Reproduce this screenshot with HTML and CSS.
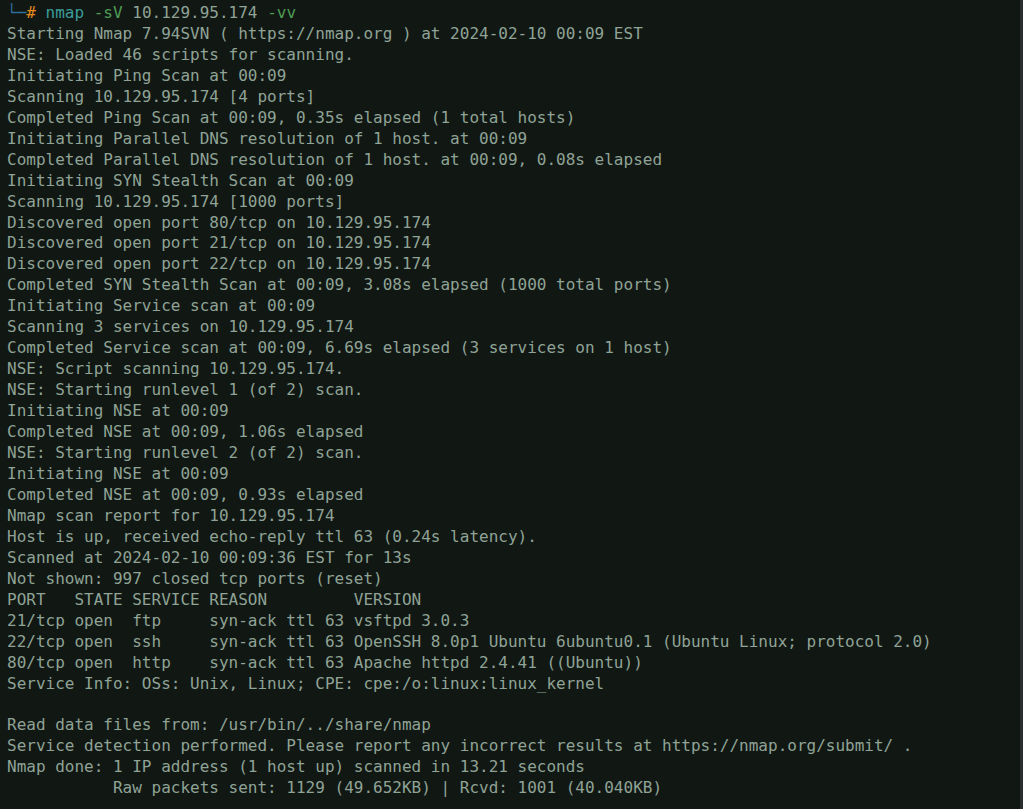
FILE: index.html
```html
<!DOCTYPE html>
<html>
<head>
<meta charset="utf-8">
<link rel="stylesheet" href="styles.css">
</head>
<body>
<div class="term">
<pre class="out"><span class="box">└─</span><span class="hash">#</span> <span class="cmd">nmap</span> <span class="flag">-sV</span> 10.129.95.174 <span class="flag">-vv</span>
Starting Nmap 7.94SVN ( https://nmap.org ) at 2024-02-10 00:09 EST
NSE: Loaded 46 scripts for scanning.
Initiating Ping Scan at 00:09
Scanning 10.129.95.174 [4 ports]
Completed Ping Scan at 00:09, 0.35s elapsed (1 total hosts)
Initiating Parallel DNS resolution of 1 host. at 00:09
Completed Parallel DNS resolution of 1 host. at 00:09, 0.08s elapsed
Initiating SYN Stealth Scan at 00:09
Scanning 10.129.95.174 [1000 ports]
Discovered open port 80/tcp on 10.129.95.174
Discovered open port 21/tcp on 10.129.95.174
Discovered open port 22/tcp on 10.129.95.174
Completed SYN Stealth Scan at 00:09, 3.08s elapsed (1000 total ports)
Initiating Service scan at 00:09
Scanning 3 services on 10.129.95.174
Completed Service scan at 00:09, 6.69s elapsed (3 services on 1 host)
NSE: Script scanning 10.129.95.174.
NSE: Starting runlevel 1 (of 2) scan.
Initiating NSE at 00:09
Completed NSE at 00:09, 1.06s elapsed
NSE: Starting runlevel 2 (of 2) scan.
Initiating NSE at 00:09
Completed NSE at 00:09, 0.93s elapsed
Nmap scan report for 10.129.95.174
Host is up, received echo-reply ttl 63 (0.24s latency).
Scanned at 2024-02-10 00:09:36 EST for 13s
Not shown: 997 closed tcp ports (reset)
PORT   STATE SERVICE REASON         VERSION
21/tcp open  ftp     syn-ack ttl 63 vsftpd 3.0.3
22/tcp open  ssh     syn-ack ttl 63 OpenSSH 8.0p1 Ubuntu 6ubuntu0.1 (Ubuntu Linux; protocol 2.0)
80/tcp open  http    syn-ack ttl 63 Apache httpd 2.4.41 ((Ubuntu))
Service Info: OSs: Unix, Linux; CPE: cpe:/o:linux:linux_kernel

Read data files from: /usr/bin/../share/nmap
Service detection performed. Please report any incorrect results at https://nmap.org/submit/ .
Nmap done: 1 IP address (1 host up) scanned in 13.21 seconds
           Raw packets sent: 1129 (49.652KB) | Rcvd: 1001 (40.040KB)</pre>
<div class="scroll"></div>
</div>
</body>
</html>
```
FILE: styles.css
```css
html, body {
  margin: 0;
  padding: 0;
  background: #111713;
}
.term {
  display: flex;
  width: 1023px;
  height: 809px;
  overflow: hidden;
  background: #111713;
}
.out {
  flex: 1;
  margin: 0;
  padding: 3px 0 0 7px;
  font-family: "DejaVu Sans Mono", "Liberation Mono", monospace;
  font-size: 16px;
  line-height: 20.95px;
  color: #8fa396;
  white-space: pre;
}
.box { color: #2f6f9a; }
.hash { color: #e08a1e; }
.cmd { color: #3a9d9a; }
.flag { color: #4f9d55; }
.scroll {
  width: 3px;
  background: #2b2e2e;
}
```
